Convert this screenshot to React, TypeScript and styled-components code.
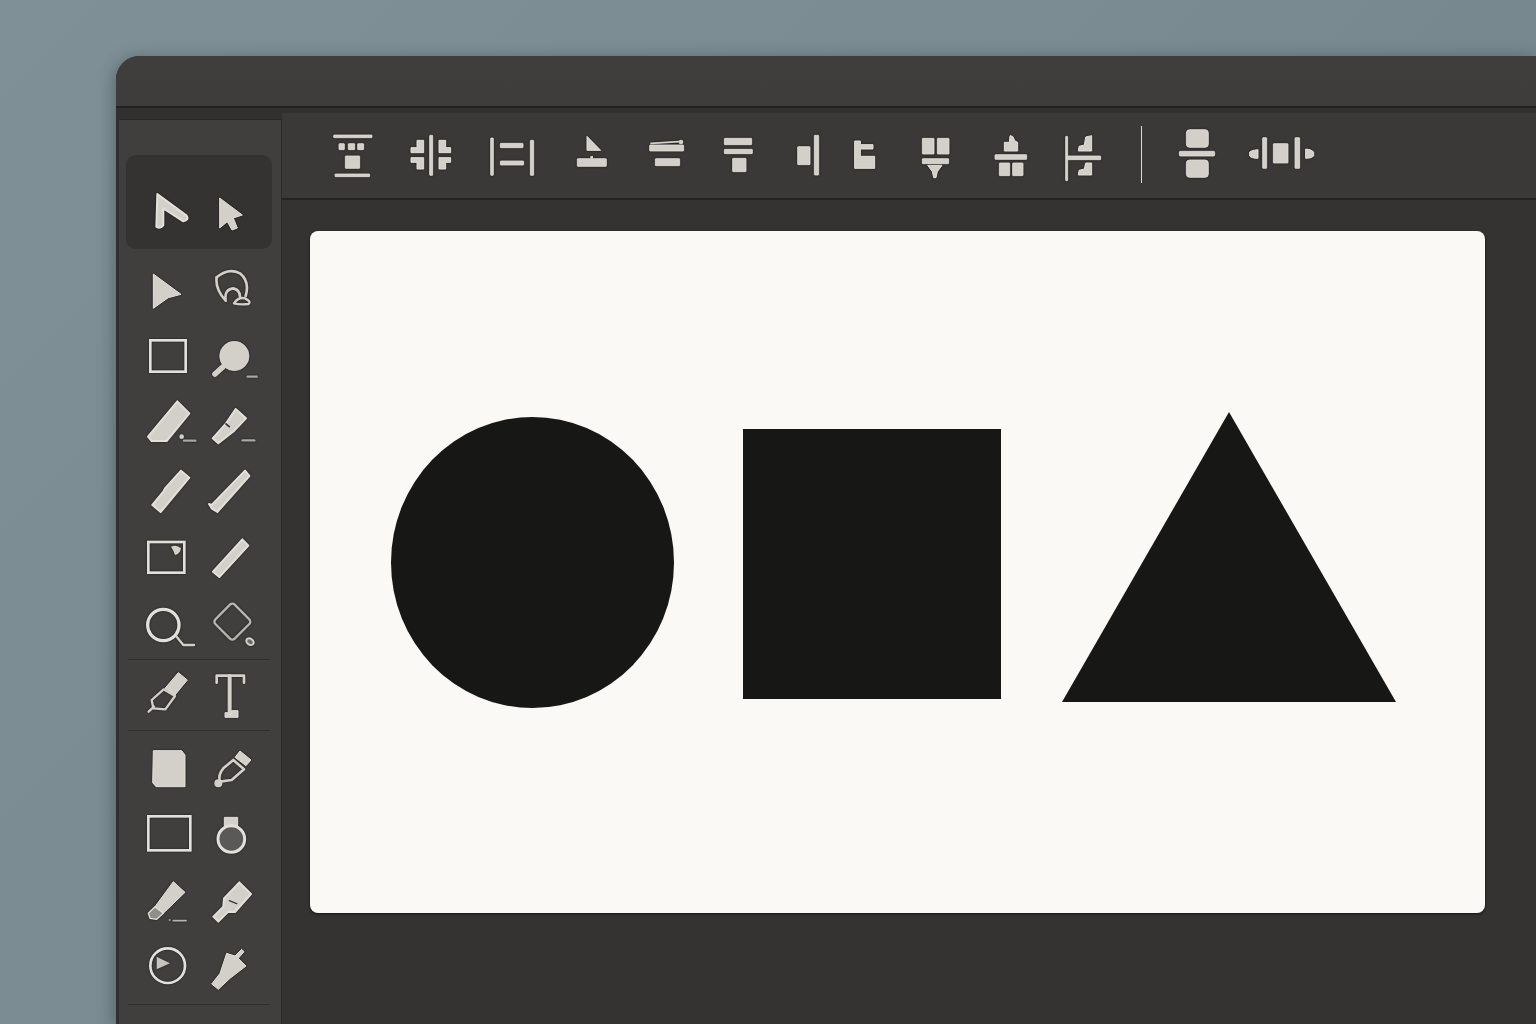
import { FC, ReactNode } from "react";
import styled, { createGlobalStyle } from "styled-components";

const INK = "#d3d0c9";
const EDGE = "#e2e0da";

const GlobalStyle = createGlobalStyle`
  html, body {
    margin: 0;
    height: 1024px;
    overflow: hidden;
    background: linear-gradient(135deg, #7f9097 0%, #7a8b92 45%, #6f8087 100%);
  }
  #root {
    height: 100%;
  }
`

const Page = styled.div`
  box-sizing: border-box;
  height: 1024px;
  padding: 56px 0 0 116px;
  overflow: hidden;
`
const Window = styled.div`
  height: 968px;
  display: flex;
  flex-direction: column;
  background: #393836;
  border-top-left-radius: 24px;
  box-shadow: -2px 2px 16px rgba(20, 30, 35, 0.35), inset 0 1px 0 #333230;
  overflow: hidden;
`
const TitleBar = styled.div`
  flex: none;
  height: 50px;
  background: linear-gradient(180deg, #3f3e3c, #3e3d3b);
  border-bottom: 2px solid #222120;
`
const Workspace = styled.div`
  flex: 1;
  min-height: 0;
  display: flex;
  background: #31302e;
`
const Sidebar = styled.aside`
  flex: none;
  box-sizing: border-box;
  width: 163px;
  margin: 11px 0 0 3px;
  padding: 0 0 0 7px;
  background: #403f3d;
  border-top: 1px solid #2a2928;
  border-right: 1px solid #2b2a29;
`
const ActiveGroup = styled.div`
  box-sizing: border-box;
  width: 146px;
  height: 94px;
  margin-top: 35px;
  padding: 33px 0 0 11px;
  background: #343331;
  border-radius: 10px;
`
const ToolRow = styled.div<{ $gap: number }>`
  display: grid;
  grid-template-columns: 62px 64px;
  justify-items: center;
  margin: ${(p) => p.$gap}px 0 0 ${(p) => (p.$gap ? 11 : 0)}px;
`
const Divider = styled.div<{ $top: number }>`
  width: 142px;
  height: 1px;
  margin: ${(p) => p.$top}px 0 0 2px;
  background: #302f2d;
`
const Glyph = styled.svg<{ $w: number; $h: number }>`
  display: block;
  flex: none;
  width: ${(p) => p.$w}px;
  height: ${(p) => p.$h}px;
  overflow: visible;
  fill: ${INK};
  stroke: none;
  filter: drop-shadow(0 0 1px rgba(0, 0, 0, 0.55));
`
const Main = styled.main`
  flex: 1;
  min-width: 0;
  display: flex;
  flex-direction: column;
`
const Toolbar = styled.div`
  flex: none;
  box-sizing: border-box;
  height: 88px;
  margin-top: 4px;
  padding: 0 0 2px 38px;
  display: flex;
  align-items: center;
  background: #3a3937;
  border-bottom: 2px solid #242322;
  border-top: 1px solid #333230;
`
const ToolbarSeparator = styled.div`
  flex: none;
  width: 1px;
  height: 57px;
  margin: 0 23px 0 22px;
  background: #dddbd5;
`
const ToolbarSpacer = styled.div`
  flex: none;
  width: 10px;
`
const Stage = styled.div`
  flex: 1;
  padding: 31px 0 0 28px;
  background: #343331;
`
const Canvas = styled.div`
  width: 1175px;
  height: 682px;
  background: #fbf9f5;
  border-radius: 8px;
  box-shadow: 0 1px 3px rgba(0, 0, 0, 0.6);
`
const Artwork = styled.svg`
  display: block;
  width: 100%;
  height: 100%;
  fill: #171715;
`

// side icons: drawn in 144 units for a 48px cell
const Tool: FC<{ x: number; y: number; children: ReactNode }> = ({ x, y, children }) => (
  <Glyph $w={48} $h={48} viewBox={`${x} ${y} 144 144`}>{children}</Glyph>
)

// top icons: 3 units per px, all 60px tall
const Align: FC<{ x: number; y?: number; w: number; children: ReactNode }> = ({ x, y = 45, w, children }) => (
  <Glyph $w={w} $h={60} viewBox={`${x} ${y} ${w * 3} 180`}>{children}</Glyph>
)

const Box: FC<{ x: number; y: number; x2: number; y2: number; r?: number }> = ({ x, y, x2, y2, r = 1.5 }) => (
  <rect x={x} y={y} width={x2 - x} height={y2 - y} rx={r} stroke={EDGE} strokeWidth={2.5} />
)

const Poly: FC<{ d: string; rounded?: boolean }> = ({ d, rounded }) => (
  <path d={d} stroke={EDGE} strokeWidth={rounded ? 6 : 3} strokeLinejoin="round" />
)

const Line: FC<{ d: string; w?: number; color?: string }> = ({ d, w = 6, color = INK }) => (
  <path d={d} fill="none" stroke={color} strokeWidth={w} strokeLinecap="round" strokeLinejoin="round" />
)

export default function App() {
  return (
    <Page>
      <GlobalStyle />
      <Window>
        <TitleBar />
        <Workspace>
          <Sidebar>
            <ActiveGroup>
              <ToolRow $gap={0}>
                <Tool x={132} y={444}>
                  <Poly rounded d="M172 462 L260 527 Q268 540 250 544 L190 505 L190 556 Q180 568 169 560 Z" />
                </Tool>
                <Tool x={321} y={444}>
                  <Poly d="M359 474 L427 525 L400 534 L412 564 L396 570 L382 545 L359 564 Z" />
                </Tool>
              </ToolRow>
            </ActiveGroup>
            <ToolRow $gap={17}>
              <Tool x={132} y={678}>
                <Poly d="M160 702 L243 763 L205 773 L160 805 Z" />
              </Tool>
              <Tool x={321} y={678}>
                <Line d="M350 712 Q385 682 420 700 Q450 725 437 768" w={8} />
                <Line d="M350 712 Q345 748 377 782 Q372 748 400 745 Q420 750 420 770" w={8} />
                <Line d="M402 790 Q415 770 435 775 Q455 785 445 792 Q420 795 402 790" w={7} />
              </Tool>
            </ToolRow>
            <ToolRow $gap={19}>
              <Tool x={132} y={879}>
                <rect x={151} y={901} width={106} height={94} fill="none" stroke={EDGE} strokeWidth={8} />
              </Tool>
              <Tool x={321} y={879}>
                <circle cx={403} cy={948} r={44} stroke={EDGE} strokeWidth={2} />
                <Line d="M375 975 L345 1002" w={17} />
                <Line d="M443 1010 H470" w={7} color="#a9a7a1" />
              </Tool>
            </ToolRow>
            <ToolRow $gap={20}>
              <Tool x={72} y={63}>
                <Poly rounded d="M172 64 L208 100 L140 183 L95 183 L84 170 Z" />
                <circle cx={185} cy={170} r={7} />
                <Line d="M192 182 H226" w={7} color="#a9a7a1" />
              </Tool>
              <Tool x={261} y={63}>
                <Poly rounded d="M347 87 L378 115 L343 152 L295 190 L278 175 L318 130 Z" />
                <Line d="M318 132 L328 140" w={5} color="#3a3937" />
                <Line d="M368 181 H403" w={7} color="#a9a7a1" />
              </Tool>
            </ToolRow>
            <ToolRow $gap={18}>
              <Tool x={72} y={261}>
                <Poly rounded d="M183 272 L208 293 L122 396 L97 375 L130 335 L135 325 Z" />
              </Tool>
              <Tool x={261} y={261}>
                <Poly rounded d="M375 272 L388 288 L292 396 L275 385 L267 372 L275 375 Z" />
              </Tool>
            </ToolRow>
            <ToolRow $gap={18}>
              <Tool x={72} y={459}>
                <rect x={85} y={486} width={108} height={92} fill="none" stroke={EDGE} strokeWidth={8} />
                <path d="M153 500 Q170 492 183 505 Q180 522 165 525 L160 512 Z" />
              </Tool>
              <Tool x={261} y={459}>
                <Poly rounded d="M367 478 L385 497 L298 591 L279 575 Z" />
              </Tool>
            </ToolRow>
            <ToolRow $gap={20}>
              <Tool x={72} y={663}>
                <circle cx={130} cy={735} r={47} fill="none" stroke={EDGE} strokeWidth={10} />
                <Line d="M170 770 L190 795 H222" w={7} />
              </Tool>
              <Tool x={261} y={663}>
                <rect x={296} y={684} width={82} height={82} rx={10} transform="rotate(45 337 725)" fill="none" stroke="#b7b5af" strokeWidth={7} />
                <ellipse cx={390} cy={785} rx={12} ry={9} transform="rotate(35 390 785)" fill="#6d6c69" stroke={INK} strokeWidth={6} />
              </Tool>
            </ToolRow>
            <Divider $top={10} />
            <ToolRow $gap={11}>
              <Tool x={42} y={33}>
                <Poly d="M145 38 L172 60 L135 105 L105 85 Z" />
                <Line d="M101 88 L135 108 L106 148 L70 145 L65 120 Z" w={7} />
                <Line d="M56 155 L72 140" w={7} />
              </Tool>
              <Tool x={231} y={33}>
                <Line d="M260 68 V47 H342 V68" w={8} />
                <Line d="M299 48 V160" w={12} />
                <Poly d="M285 158 H293 V164 H305 V152 L324 152 V172 H285 Z" />
              </Tool>
            </ToolRow>
            <Divider $top={11} />
            <ToolRow $gap={13}>
              <Tool x={72} y={132}>
                <Poly d="M100 152 L185 152 L195 165 L195 260 L108 260 L98 248 Z" />
              </Tool>
              <Tool x={261} y={132}>
                <Poly d="M360 153 L393 180 L378 197 L345 172 Z" />
                <Line d="M340 180 L372 208 L335 240 L300 245 Q293 225 310 205 Z" w={8} />
                <circle cx={295} cy={250} r={12} />
              </Tool>
            </ToolRow>
            <ToolRow $gap={18}>
              <Tool x={72} y={330}>
                <rect x={85} y={349} width={126} height={102} fill="none" stroke={EDGE} strokeWidth={8} />
              </Tool>
              <Tool x={261} y={330}>
                <path d="M313 352 H353 V392 H313 Z" stroke={EDGE} strokeWidth={3} />
                <circle cx={334} cy={417} r={40} fill="#5a5957" stroke={EDGE} strokeWidth={9} />
              </Tool>
            </ToolRow>
            <ToolRow $gap={20}>
              <Tool x={72} y={534}>
                <Poly d="M160 545 L195 577 L130 640 L105 620 Z" />
                <path d="M105 620 L130 640 L110 658 L90 655 L85 640 Z" fill="#8f8e89" stroke={EDGE} strokeWidth={4} strokeLinejoin="round" />
                <Line d="M148 660 H150 M160 662 H198" w={5} color="#b7b5af" />
              </Tool>
              <Tool x={261} y={534}>
                <Poly rounded d="M358 547 L393 582 L345 636 L325 635 L295 665 L280 650 L310 620 L312 595 Z" />
                <Line d="M328 602 L350 611" w={4} color="#3a3937" />
              </Tool>
            </ToolRow>
            <ToolRow $gap={16}>
              <Tool x={72} y={726}>
                <circle cx={143} cy={797} r={52} fill="none" stroke={EDGE} strokeWidth={8} />
                <path d="M110 770 L150 790 L110 808 Z" fill="#c6c3bc" />
              </Tool>
              <Tool x={261} y={726}>
                <Poly d="M320 760 L345 768 L365 748 L372 755 L355 775 L378 798 L330 835 L295 868 L275 852 L300 820 Z" />
              </Tool>
            </ToolRow>
            <Divider $top={14} />
          </Sidebar>
          <Main>
            <Toolbar>
              <Align x={0} w={72}>
                <Box x={41} y={75} x2={156} y2={83} />
                <Box x={57} y={101} x2={73} y2={119} />
                <Box x={85} y={101} x2={104} y2={119} />
                <Box x={113} y={101} x2={131} y2={119} />
                <Box x={76} y={138} x2={119} y2={175} />
                <Box x={45} y={192} x2={149} y2={200} />
              </Align>
              <Align x={216} w={80}>
                <Box x={329} y={76} x2={338} y2={196} />
                <Poly d="M291 91 H311 V128 H273 V113 H291 Z" />
                <Poly d="M357 91 H377 V113 H392 V128 H357 Z" />
                <Poly d="M273 143 H311 V177 H291 V157 H273 Z" />
                <Poly d="M357 143 H392 V157 H377 V177 H357 Z" />
              </Align>
              <Align x={456} w={80}>
                <Box x={512} y={84} x2={520} y2={196} />
                <Box x={631} y={91} x2={641} y2={196} />
                <Box x={541} y={100} x2={609} y2={113} />
                <Box x={541} y={153} x2={611} y2={165} />
              </Align>
              <Align x={696} w={77}>
                <Poly d="M801 79 L842 121 H801 Z" />
                <rect x={811} y={138} width={8} height={8} />
                <Box x={772} y={146} x2={859} y2={169} />
              </Align>
              <Align x={927} w={73}>
                <Box x={989} y={105} x2={1091} y2={123} />
                <Line d="M993 100 L1076 95" w={5} />
                <circle cx={1083} cy={96} r={7} />
                <Box x={1006} y={146} x2={1079} y2={167} />
              </Align>
              <Align x={6} w={72}>
                <Box x={73} y={85} x2={155} y2={104} />
                <Box x={73} y={118} x2={157} y2={131} />
                <Box x={98} y={145} x2={138} y2={185} />
              </Align>
              <Align x={222} w={63}>
                <Box x={293} y={110} x2={330} y2={164} />
                <Box x={343} y={76} x2={356} y2={195} />
              </Align>
              <Align x={411} w={63}>
                <Poly d="M464 93 H481 V104 H519 V117 H481 V139 H524 V175 H464 Z" />
              </Align>
              <Align x={600} w={73}>
                <Box x={667} y={85} x2={702} y2={132} />
                <Box x={712} y={85} x2={747} y2={132} />
                <Box x={667} y={146} x2={746} y2={161} />
                <Poly d="M683 166 H726 L712 185 L708 203 H701 L697 185 Z" />
              </Align>
              <Align x={819} w={74}>
                <Poly d="M913 97 H928 L930 77 L938 79 L945 93 L953 97 V123 H913 Z" />
                <Box x={885} y={134} x2={980} y2={148} />
                <Box x={898} y={159} x2={929} y2={197} />
                <Box x={938} y={159} x2={969} y2={197} />
              </Align>
              <Align x={1041} w={72}>
                <Box x={1097} y={79} x2={1103} y2={212} />
                <Box x={1101} y={138} x2={1202} y2={149} />
                <Poly d="M1135 123 L1137 109 L1153 105 L1157 81 L1175 77 V123 Z" />
                <Poly d="M1135 195 L1137 181 L1153 177 L1157 159 L1175 159 V195 Z" />
              </Align>
              <ToolbarSeparator />
              <Align x={135} y={225} w={65}>
                <Box x={199} y={239} x2={265} y2={292} r={10} />
                <Box x={178} y={304} x2={284} y2={318} r={3} />
                <Box x={199} y={330} x2={265} y2={382} r={10} />
              </Align>
              <ToolbarSpacer />
              <Align x={360} y={225} w={82}>
                <Poly d="M414 299 V325 Q395 325 389 318 V306 Q395 300 414 299 Z" />
                <Box x={428} y={263} x2={440} y2={355} />
                <Box x={460} y={281} x2={504} y2={339} />
                <Box x={525} y={263} x2={539} y2={355} />
                <Poly d="M557 297 Q575 298 581 306 V318 Q575 325 557 325 Z" />
              </Align>
            </Toolbar>
            <Stage>
              <Canvas>
                <Artwork viewBox="0 0 1175 682">
                  <ellipse cx={222.5} cy={331.5} rx={141.5} ry={145.5} />
                  <rect x={433} y={198} width={258} height={270} />
                  <polygon points="919,181 1086,471 752,471" />
                </Artwork>
              </Canvas>
            </Stage>
          </Main>
        </Workspace>
      </Window>
    </Page>
  )
}
